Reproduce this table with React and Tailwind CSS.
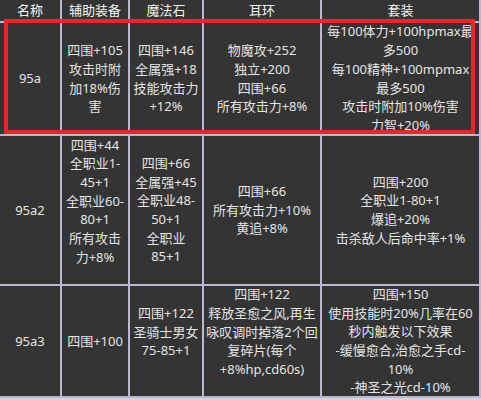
import React from "react";

const rows = [
  {
    name: "95a",
    cells: [
      { lines: ["四围+105", "攻击时附", "加18%伤", "害"] },
      { lines: ["四围+146", "全属强+18", "技能攻击力", "+12%"] },
      { lines: ["物魔攻+252", "独立+200", "四围+66", "所有攻击力+8%"] },
      {
        lines: ["每100体力+100hpmax最", "多500", "每100精神+100mpmax", "最多500", "攻击时附加10%伤害", "力智+20%"],
      },
    ],
  },
  {
    name: "95a2",
    cells: [
      { lines: ["四围+44", "全职业1-", "45+1", "全职业60-", "80+1", "所有攻击", "力+8%"], up: true },
      { lines: ["四围+66", "全属强+45", "全职业48-", "50+1", "全职业", "85+1"] },
      { lines: ["四围+66", "所有攻击力+10%", "黄追+8%"] },
      { lines: ["四围+200", "全职业1-80+1", "爆追+20%", "击杀敌人后命中率+1%"] },
    ],
  },
  {
    name: "95a3",
    cells: [
      { lines: ["四围+100"] },
      { lines: ["四围+122", "圣骑士男女", "75-85+1"], up: true },
      {
        lines: ["四围+122", "释放圣愈之风,再生", "咏叹调时掉落2个回", "复碎片(每个", "+8%hp,cd60s)"],
        up: true,
      },
      {
        lines: ["四围+150", "使用技能时20%几率在60", "秒内触发以下效果", "-缓慢愈合,治愈之手cd-", "10%", "-神圣之光cd-10%"],
      },
    ],
  },
];

const headers = ["名称", "辅助装备", "魔法石", "耳环", "套装"];

const Cell = ({ children, className = "" }) => (
  <div
    className={`bg-[#343434] flex flex-col items-center justify-center text-center overflow-hidden whitespace-nowrap ${className}`}
  >
    {children}
  </div>
);

export default function App() {
  return (
    <div
      className="relative w-[481px] h-[400px] overflow-hidden bg-[#d7d3dc]"
      style={{ fontFamily: '"Noto Sans", "Noto Sans CJK SC", sans-serif' }}
    >
      <div className="grid grid-cols-[60px_66px_72px_116px_157px] grid-rows-[21px_111px_148px_110px] gap-[2px] pr-[2px] pb-[2px] w-[481px] bg-[#bfb7cf] text-[13px] text-[#e4e4e4] leading-[18.7px]">
        {headers.map((t) => (
          <Cell key={t} className="bg-[#2f2f2f] text-[#f4f4f4]">
            {t}
          </Cell>
        ))}
        {rows.map((r) => (
          <React.Fragment key={r.name}>
            <Cell>{r.name}</Cell>
            {r.cells.map((c, i) => (
              <Cell key={i}>
                <div className={c.up ? "-mt-[18px]" : ""}>
                  {c.lines.map((l, j) => (
                    <div key={j}>{l}</div>
                  ))}
                </div>
              </Cell>
            ))}
          </React.Fragment>
        ))}
      </div>

      {/* red highlight around the 95a row */}
      <div className="absolute left-[4px] top-[19px] w-[471px] h-[115px] border-4 border-[#e8262b] pointer-events-none" />
    </div>
  );
}
